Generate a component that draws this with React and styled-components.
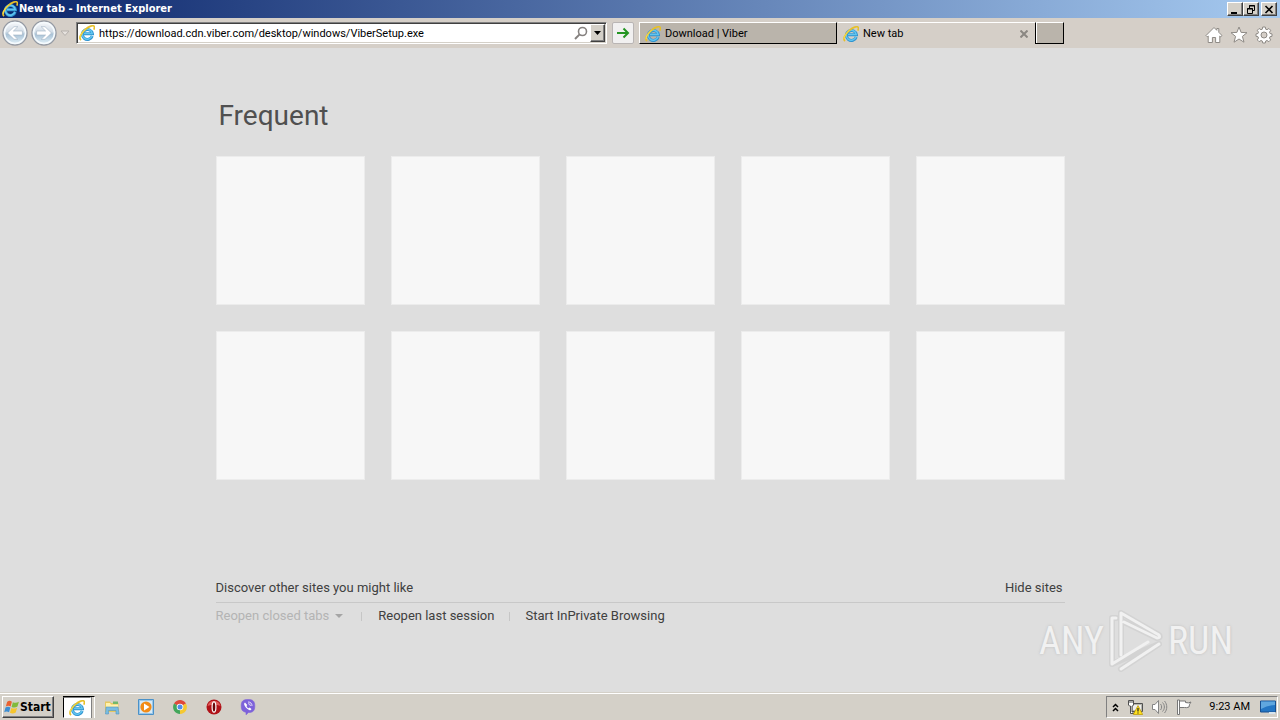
import React from "react";
import styled, { createGlobalStyle, css } from "styled-components";

const GlobalStyle = createGlobalStyle`
  * { box-sizing: border-box; }
  body {
    margin: 0;
    background: #dedede;
    color: #000;
    font-family: Roboto, "Liberation Sans", sans-serif;
    font-size: 11px;
    line-height: 14px;
  }
  button, input { font: inherit; color: inherit; margin: 0; padding: 0; border: 0; background: none; }
  a { color: inherit; text-decoration: none; }
  svg { display: block; flex: none; }
`;

const raised = css`
  background: #d4d0c8;
  border: 1px solid;
  border-color: #fff #404040 #404040 #fff;
  box-shadow: inset -1px -1px 0 #808080;
`;

const Window = styled.div`
  min-height: 100vh;
  display: flex;
  flex-direction: column;
`;

const TitleBar = styled.header`
  display: flex;
  align-items: center;
  height: 18px;
  padding: 0 3px 0 2px;
  gap: 1px;
  background: linear-gradient(90deg, #0a246a, #a6caf0);
`;

const Title = styled.h1`
  flex: 1;
  margin: 0;
  color: #fff;
  font: bold 11px/18px "DejaVu Sans Condensed", "DejaVu Sans", sans-serif;
  white-space: nowrap;
`;

const CaptionButtons = styled.div`
  display: flex;
`;

const CaptionButton = styled.button`
  ${raised}
  width: 16px;
  height: 14px;
  display: grid;
  place-items: center;
  &:last-child { margin-left: 2px; }
`;

const Toolbar = styled.nav`
  display: flex;
  align-items: center;
  height: 30px;
  padding-left: 2px;
  background: #d5cfc8;
`;

const NavButtons = styled.div`
  display: flex;
  align-items: center;
  gap: 3px;
  width: 74px;
`;

const PlainButton = styled.button`
  display: grid;
  place-items: center;
`;

const AddressBar = styled.form`
  flex: 1;
  display: flex;
  align-items: center;
  height: 22px;
  padding: 0 1px 0 2px;
  gap: 4px;
  background: #fff;
  border: 1px solid;
  border-color: #808080 #fff #fff #808080;
  box-shadow: inset 1px 1px 0 #404040, inset -1px -1px 0 #d4d0c8;
`;

const AddressInput = styled.input`
  flex: 1;
  min-width: 0;
  height: 18px;
  padding-top: 1px;
  outline: 0;
`;

const AddressActions = styled.div`
  display: flex;
  align-items: center;
  gap: 2px;
`;

const DropButton = styled.button`
  ${raised}
  width: 15px;
  height: 18px;
  display: grid;
  place-items: center;
`;

const GoButton = styled.button`
  width: 22px;
  height: 22px;
  margin: 0 5px;
  display: grid;
  place-items: center;
  background: #f1f0f0;
  border: 1px solid #b9b5b4;
  border-radius: 2px;
`;

const Tabs = styled.div`
  display: flex;
  align-items: center;
  height: 22px;
`;

const Tab = styled.button`
  display: flex;
  align-items: center;
  gap: 4px;
  width: 198px;
  height: 22px;
  padding: 1px 7px 0 5px;
  text-align: left;
  background: ${(p) => (p.$active ? "#d5cfc8" : "#bab4ab")};
  border: solid;
  border-width: 1px ${(p) => (p.$active ? 0 : 1)}px ${(p) => (p.$active ? 0 : 1)}px 1px;
  border-color: #fff #000 #000 ${(p) => (p.$active ? "#d5cfc8" : "#fff")};
`;

const TabLabel = styled.span`
  flex: 1;
`;

const NewTab = styled.button`
  width: 29px;
  height: 22px;
  background: #bab4ab;
  border: 1px solid;
  border-color: #fff #000 #000;
  box-shadow: inset 1px 0 0 #fff;
`;

const Tools = styled.div`
  display: flex;
  justify-content: flex-end;
  gap: 7px;
  width: 216px;
  padding: 3px 7px 0 0;
`;

const Page = styled.main`
  position: relative;
  flex: 1;
  padding: 50px 24px 60px;
`;

const Content = styled.div`
  max-width: 849px;
  margin: 0 auto;
`;

const Heading = styled.h2`
  margin: 0 0 22px;
  padding-left: 3px;
  color: #505050;
  font: 400 28px/36px Roboto, "Liberation Sans", sans-serif;
`;

const Grid = styled.div`
  display: grid;
  grid-template-columns: repeat(5, 1fr);
  gap: 26px;
`;

const Tile = styled.div`
  aspect-ratio: 1;
  background: #f7f7f7;
  border: 1px solid #ececec;
`;

const Footer = styled.footer`
  margin-top: 99px;
  color: #404040;
  font: 13px/18px Roboto, "Liberation Sans", sans-serif;
`;

const FooterTop = styled.div`
  display: flex;
  justify-content: space-between;
  padding: 0 2px 5px 0;
  border-bottom: 1px solid #c8c8c8;
`;

const FooterLinks = styled.div`
  display: flex;
  align-items: center;
  padding-top: 4px;
`;

const FooterItem = styled.a`
  & + & { margin-left: 15px; padding-left: 16px; background: linear-gradient(#c6c6c6, #c6c6c6) 0 60% / 1px 9px no-repeat; }
`;

const ClosedTabs = styled.button`
  display: flex;
  align-items: center;
  gap: 6px;
  color: #b4b4b4;
  padding-right: 19px;
  margin-right: 16px;
  background: linear-gradient(#c6c6c6, #c6c6c6) 100% 60% / 1px 9px no-repeat;
`;

const Watermark = styled.div`
  position: absolute;
  right: 47px;
  bottom: 20px;
  display: flex;
  align-items: center;
  gap: 4px;
  color: #f1f1f1;
  font: 400 38px/64px "Roboto Condensed", "Open Sans Condensed", Roboto, sans-serif;
  text-shadow: 0 0 3px #bdbdbd;
  pointer-events: none;
`;

const Taskbar = styled.footer`
  display: flex;
  align-items: center;
  height: 27px;
  padding: 0 2px;
  background: #d4d0c8;
  border-top: 1px solid #fff;
  box-shadow: 0 -1px 0 #d4d0c8;
`;

const StartButton = styled.button`
  ${raised}
  display: flex;
  align-items: center;
  width: 52px;
  height: 22px;
  padding-left: 1px;
  margin-right: 9px;
  font: bold 12px/16px "DejaVu Sans Condensed", "DejaVu Sans", sans-serif;
`;

const TaskButton = styled.button`
  display: grid;
  place-items: center;
  width: 34px;
  height: 22px;
`;

const ActiveTask = styled.span`
  display: flex;
  width: 32px;
  height: 22px;
  border-right: 1px solid #fff;
  border-top: 1px solid #000;

  ${TaskButton} {
    width: 28px;
    height: 21px;
    background: #fff;
    border: 1px solid;
    border-color: #808080 #fff #fff #000;
    box-shadow: 1px 0 0 #808080;
  }
`;

const Tray = styled.div`
  display: flex;
  align-items: center;
  gap: 8px;
  height: 22px;
  margin-left: auto;
  padding: 0 1px 0 5px;
  border: 1px solid;
  border-color: #808080 #fff #fff #808080;
`;

const Clock = styled.time`
  margin: 0 2px 0 8px;
`;

function IeIcon({ size = 16 }) {
  return (
    <svg width={size} height={size} viewBox="0 0 16 16" fill="none">
      <path d="M13.2 11A5 5 0 1 1 13.4 8.800H5" stroke="#2f93cf" strokeWidth="3" />
      <path d="M13 10.800A5 5 0 1 1 13.200 8.500H5" stroke="#62c5f0" strokeWidth="1.500" />
      <path d="M2.200 14.900C-.5 13.800 1.600 8.700 5.800 4.800 9.500 1.400 14.600-.5 15.300 1.600c.3.9 0 2-.5 3" stroke="#e6c02a" strokeWidth="1.700" />
      <path d="M1.300 13C.6 11 3.200 7 6.700 4" stroke="#fbe35a" strokeWidth=".8" />
    </svg>
  );
}

function RoundArrow({ id, flip }) {
  return (
    <svg width="26" height="26" viewBox="0 0 26 26">
      <defs>
        <linearGradient id={id} x1="0" y1="0" x2="0" y2="1">
          <stop offset="0" stopColor="#fafbfd" />
          <stop offset=".45" stopColor="#d3dde7" />
          <stop offset=".55" stopColor="#a9c2d6" />
          <stop offset="1" stopColor="#e8f6fc" />
        </linearGradient>
      </defs>
      <circle cx="13" cy="13" r="12" fill={`url(#${id})`} stroke="#969ba4" strokeWidth="1.4" />
      <circle cx="13" cy="13" r="10.5" fill="none" stroke="#f5fafd" strokeWidth="1.6" />
      <path
        transform={flip ? "matrix(-1 0 0 1 26 0)" : undefined}
        d="M5.500 13l6.500-6.300h3.800L11.400 11h9v4h-9l4.400 4.300H12z"
        fill="#fff"
        stroke="#9fb2c3"
        strokeWidth=".6"
      />
    </svg>
  );
}

function Caret({ w = 7, fill = "#000" }) {
  return (
    <svg width={w} height="4" viewBox="0 0 8 4" preserveAspectRatio="none">
      <path d="M0 0h8L4 4z" fill={fill} />
    </svg>
  );
}

function RecentCaret() {
  return (
    <svg width="10" height="7" viewBox="0 0 10 7">
      <path d="M1 1h8L5 5.500z" fill="#e6e2de" stroke="#b5b0ac" />
    </svg>
  );
}

const toolIcon = { width: 18, height: 18, viewBox: "0 0 18 18", fill: "#fff", stroke: "#8e8a85", strokeWidth: 1, strokeLinejoin: "round" };

function HomeIcon() {
  return (
    <svg {...toolIcon}>
      <path d="M9 1.5l2.8 2.8V2.5h2v3.8L17 9.5l-1.3 1.3-.9-.8v6.5h-4.2v-5H7.4v5H3.2V10l-.9.8L1 9.5z" />
    </svg>
  );
}

function StarIcon() {
  return (
    <svg {...toolIcon}>
      <path d="M9 1l2.1 5.4 5.9.3-4.6 3.7 1.6 5.8L9 13l-5 3.2 1.6-5.8L1 6.700l5.900-.3z" />
    </svg>
  );
}

function GearIcon() {
  return (
    <svg {...toolIcon}>
      <path fillRule="evenodd" d="M7.700 1h2.600l.4 2.200 1.300.5 1.900-1.200 1.800 1.800-1.200 1.900.5 1.300 2 .4v2.400l-2 .4-.5 1.300 1.200 1.900-1.800 1.800-1.900-1.200-1.300.5-.4 2H7.700l-.4-2-1.300-.5-1.900 1.200-1.800-1.800L3.500 12 3 10.700l-2-.4V7.900l2-.4.500-1.300-1.200-1.900 1.800-1.800L6 3.700l1.300-.5zM9 6a3 3 0 1 0 0 6 3 3 0 0 0 0-6z" />
    </svg>
  );
}

function WindowsFlag() {
  return (
    <svg width="16" height="16" viewBox="0 0 15 15">
      <path d="M3 2.500Q5.300 1 7.400 2.500L6.200 7Q4 5.600 1.700 7z" fill="#ea6231" />
      <path d="M8.300 3Q11 4.300 14 2.600L12.600 7.100Q10 8.600 7.100 7.400z" fill="#81ba3b" />
      <path d="M1.400 8Q3.700 6.600 6 8L4.700 12.500Q2.500 11 .2 12.500z" fill="#3d8ed3" />
      <path d="M6.900 8.500Q9.700 9.700 12.300 8.100L11 12.700Q8.300 14.200 5.600 13z" fill="#f6c52d" />
    </svg>
  );
}

function FolderIcon() {
  return (
    <svg width="16" height="16" viewBox="0 0 16 16">
      <path d="M1 2.500h5l1 1.500h7.500v9H1z" fill="#e6c861" />
      <path d="M2 4h4l1 1.500h7V9H2z" fill="#fff2ad" />
      <path d="M9 2.500h5V5H9z" fill="#72b86c" />
      <path d="M2 8h12l1 7h-3v-3.500H4.500V15H1.500z" fill="#79bde2" stroke="#5396c1" strokeWidth=".6" />
    </svg>
  );
}

function MediaIcon() {
  return (
    <svg width="16" height="16" viewBox="0 0 16 16">
      <path d="M.5.500h15v15H.5z" fill="#9ac7e9" stroke="#4a91c8" />
      <path d="M2 2h12v12H2z" fill="#d7eaf6" />
      <circle cx="8" cy="8" r="5.600" fill="#f28b16" />
      <path d="M6 4.500l5.500 3.500L6 11.500z" fill="#fff" />
    </svg>
  );
}

function ChromeIcon() {
  return (
    <svg width="14" height="14" viewBox="0 0 14 14">
      <path d="M7 7L1 3.500A7 7 0 0 1 13 3.500z" fill="#df493b" />
      <path d="M7 7l6-3.500A7 7 0 0 1 7 14z" fill="#f5c931" />
      <path d="M7 7v7A7 7 0 0 1 1 3.500z" fill="#43a65b" />
      <circle cx="7" cy="7" r="3.300" fill="#fff" />
      <circle cx="7" cy="7" r="2.500" fill="#518ee8" />
    </svg>
  );
}

function OperaIcon() {
  return (
    <svg width="16" height="16" viewBox="0 0 16 16">
      <circle cx="8" cy="8" r="7.500" fill="#b01218" />
      <path d="M1.500 7A6.700 6.700 0 0 1 14.500 7Q8 4 1.500 7z" fill="#e05a57" />
      <ellipse cx="8" cy="8" rx="1.900" ry="5.200" fill="#6b0709" stroke="#fff" strokeWidth="1.200" />
    </svg>
  );
}

function ViberIcon() {
  return (
    <svg width="16" height="16" viewBox="0 0 16 16">
      <path d="M8 .5c4.800 0 6.800 1.500 6.800 6.500S12.700 13.500 8.500 13.500L6 15.800v-2.500C2.500 12.700 1.200 11 1.200 7 1.200 2 3.200.5 8 .5z" fill="#7d62da" stroke="#7d62da" strokeWidth=".6" />
      <path d="M5 3.500C3.700 4.200 4 5.500 5 7.300c1 1.800 2.700 3.200 4.700 3.900.8.200 1.700-.8 1.700-1.300L9.700 8.500l-1 .7C7.700 8.900 6.800 8 6.500 6.900l.7-.9z" fill="#fff" />
      <path d="M8 3c2.700 0 4 1.500 4 4M8.200 4.700c1.400.1 2.100.9 2.200 2.200" fill="none" stroke="#fff" strokeWidth=".8" />
    </svg>
  );
}

function NetworkIcon() {
  return (
    <svg width="16" height="16" viewBox="0 0 16 16">
      <path d="M4.500 4.500h11v8h-11z" fill="#b8b8b0" stroke="#505050" />
      <path d="M6 6h8v5H6z" fill="#eee" />
      <path d="M1.500 1.500h5V6l-1 1H5v6h3v1.500H3.500V7h-1l-1-1z" fill="#fff" stroke="#505050" />
      <path d="M3 1v3m2-3v3" stroke="#505050" />
      <path d="M11 6.500l4.700 9H6.300z" fill="#ffe11d" stroke="#b99400" strokeWidth=".7" />
      <path d="M11 9v3.500m0 1v1" stroke="#222" strokeWidth="1.200" />
    </svg>
  );
}

function SpeakerIcon() {
  return (
    <svg width="17" height="16" viewBox="0 0 17 16" fill="none" stroke="#858585">
      <path d="M1.500 5.500h2.500l3.500-4v13l-3.500-4h-2.500z" fill="#fff" />
      <path d="M9.500 5c1.500 1.500 1.500 4.500 0 6M11.500 3.500c2.500 2.500 2.500 6.500 0 9M13.500 2c3 3.500 3 8.500 0 12" />
    </svg>
  );
}

function FlagIcon() {
  return (
    <svg width="17" height="16" viewBox="0 0 17 16" fill="#fff" stroke="#777">
      <path d="M3.500 2h6v1.500q3 1 5.500-.5-1.800 2-2 5-2.500 1-4.500.500H3.500z" />
      <path d="M1.500 1h2v14.500h-2z" />
    </svg>
  );
}

function DesktopIcon() {
  return (
    <svg width="16" height="15" viewBox="0 0 16 15">
      <path d="M.5 1h15v11H.5z" fill="#2476c4" stroke="#174f91" />
      <path d="M1 1.500h14V5Q8 5 1 9z" fill="#60a7df" />
      <path d="M9 12h6v2H9z" fill="#d7e4ed" />
    </svg>
  );
}

function PlayMark() {
  return (
    <svg width="56" height="64" viewBox="0 0 56 64" fill="none" strokeLinecap="round" strokeLinejoin="round">
      <g stroke="#cfcfcf" strokeWidth="6" opacity=".7">
        <path d="M13 46V4l38 22q2 3-2 3L16 13" />
        <path d="M8 9H4v46l47-20L13 60" />
      </g>
      <g stroke="#f1f1f1" strokeWidth="3">
        <path d="M13 46V4l38 22q2 3-2 3L16 13" />
        <path d="M8 9H4v46l36-22M51 35L13 60" />
      </g>
    </svg>
  );
}

const tasks = [
  ["File Explorer", FolderIcon],
  ["Media Player", MediaIcon],
  ["Chrome", ChromeIcon],
  ["Opera", OperaIcon],
  ["Viber", ViberIcon],
];

export default function App() {
  return (
    <Window>
      <GlobalStyle />
      <TitleBar>
        <IeIcon />
        <Title>New tab - Internet Explorer</Title>
        <CaptionButtons>
          <CaptionButton aria-label="Minimize">
            <svg width="10" height="9"><path d="M1 7h6v2H1z" /></svg>
          </CaptionButton>
          <CaptionButton aria-label="Restore">
            <svg width="10" height="9" fill="none" stroke="#000"><path d="M3.500 3V.5h5v5H6.500M3 1h6M1.500 3.500h5v5h-5zM1 4h6" /></svg>
          </CaptionButton>
          <CaptionButton aria-label="Close">
            <svg width="10" height="9" fill="none" stroke="#000" strokeWidth="1.600"><path d="M1.500 1l7 7M8.500 1l-7 7" /></svg>
          </CaptionButton>
        </CaptionButtons>
      </TitleBar>

      <Toolbar>
        <NavButtons>
          <PlainButton aria-label="Back"><RoundArrow id="back" /></PlainButton>
          <PlainButton aria-label="Forward"><RoundArrow id="forward" flip /></PlainButton>
          <PlainButton aria-label="Recent pages"><RecentCaret /></PlainButton>
        </NavButtons>
        <AddressBar onSubmit={(e) => e.preventDefault()}>
          <IeIcon />
          <AddressInput aria-label="Address" defaultValue="https://download.cdn.viber.com/desktop/windows/ViberSetup.exe" />
          <AddressActions>
            <PlainButton type="button" aria-label="Search">
              <svg width="14" height="14" viewBox="0 0 14 14" fill="none" stroke="#85817f" strokeWidth="1.600">
                <circle cx="8.500" cy="5.500" r="4" /><path d="M5.600 8.400L1 13" strokeWidth="2" />
              </svg>
            </PlainButton>
            <DropButton type="button" aria-label="Show addresses"><Caret /></DropButton>
          </AddressActions>
        </AddressBar>
        <GoButton aria-label="Go">
          <svg width="14" height="12" viewBox="0 0 14 12" fill="none" stroke="#249522" strokeWidth="2"><path d="M1 6h11M7.500 1.500L12 6l-4.500 4.500" /></svg>
        </GoButton>
        <Tabs>
          <Tab><IeIcon /><TabLabel>Download | Viber</TabLabel></Tab>
          <Tab $active>
            <IeIcon /><TabLabel>New tab</TabLabel>
            <svg width="8" height="8" viewBox="0 0 8 8" stroke="#8b8782" strokeWidth="2"><path d="M.5.500l7 7M7.500.500l-7 7" /></svg>
          </Tab>
          <NewTab aria-label="New tab" />
        </Tabs>
        <Tools>
          <PlainButton aria-label="Home"><HomeIcon /></PlainButton>
          <PlainButton aria-label="Favorites"><StarIcon /></PlainButton>
          <PlainButton aria-label="Tools"><GearIcon /></PlainButton>
        </Tools>
      </Toolbar>

      <Page>
        <Content>
          <Heading>Frequent</Heading>
          <Grid>
            {Array.from({ length: 10 }, (_, i) => <Tile key={i} />)}
          </Grid>
          <Footer>
            <FooterTop>
              <a href="#discover">Discover other sites you might like</a>
              <a href="#hide">Hide sites</a>
            </FooterTop>
            <FooterLinks>
              <ClosedTabs disabled>Reopen closed tabs <Caret w={8} fill="#a5a5a5" /></ClosedTabs>
              <FooterItem href="#session">Reopen last session</FooterItem>
              <FooterItem href="#private">Start InPrivate Browsing</FooterItem>
            </FooterLinks>
          </Footer>
        </Content>
        <Watermark>
          <span>ANY</span>
          <PlayMark />
          <span>RUN</span>
        </Watermark>
      </Page>

      <Taskbar>
        <StartButton><WindowsFlag />Start</StartButton>
        <ActiveTask><TaskButton aria-label="Internet Explorer"><IeIcon /></TaskButton></ActiveTask>
        {tasks.map(([name, Icon]) => (
          <TaskButton key={name} aria-label={name}><Icon /></TaskButton>
        ))}
        <Tray>
          <PlainButton aria-label="Show hidden icons">
            <svg width="7" height="9" viewBox="0 0 7 9" fill="none" stroke="#000" strokeWidth="1.500"><path d="M1 4l2.500-2.500L6 4M1 8l2.500-2.500L6 8" /></svg>
          </PlainButton>
          <NetworkIcon />
          <SpeakerIcon />
          <FlagIcon />
          <Clock>9:23 AM</Clock>
          <PlainButton aria-label="Show desktop"><DesktopIcon /></PlainButton>
        </Tray>
      </Taskbar>
    </Window>
  );
}
